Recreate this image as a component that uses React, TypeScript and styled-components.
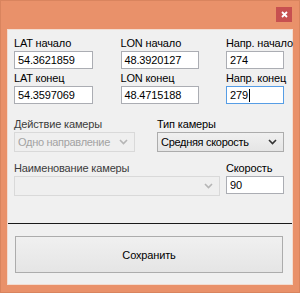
import React, { FC } from "react";
import styled, { createGlobalStyle } from "styled-components";

const Global = createGlobalStyle`
  html, body {
    margin: 0;
    padding: 0;
    background: #ffffff;
  }
  * {
    box-sizing: border-box;
  }
`;

const Frame = styled.div`
  width: 300px;
  height: 293px;
  background-color: #e9916a;
  border: 1px solid #d9845e;
  display: flex;
  flex-direction: column;
  padding: 0 6px 7px 6px;
  font-family: "Liberation Sans", Arial, sans-serif;
  font-size: 11px;
  letter-spacing: -0.15px;
  color: #000;
`;

const TitleBar = styled.div`
  height: 28px;
  display: flex;
  justify-content: flex-end;
  padding-top: 6px;
  padding-right: 1px;
`;

const CloseButton = styled.button`
  width: 16px;
  height: 15px;
  border: none;
  padding: 0;
  background-color: #c75050;
  display: flex;
  align-items: center;
  justify-content: center;
`;

const Client = styled.div`
  flex: 1;
  background-color: #f0f0f0;
  border: 1px solid #f3dcd0;
  display: flex;
  flex-direction: column;
`;

const Fields = styled.div`
  padding: 6px 8px 0 6px;
  display: flex;
  flex-direction: column;
`;

const Row = styled.div<{ $top?: number }>`
  display: flex;
  justify-content: space-between;
  align-items: flex-start;
  margin-top: ${(p) => p.$top ?? 0}px;
`;

const Field = styled.div<{ $w: number }>`
  width: ${(p) => p.$w}px;
  display: flex;
  flex-direction: column;
`;

const Label = styled.div<{ $muted?: boolean }>`
  height: 15px;
  line-height: 15px;
  white-space: nowrap;
  color: ${(p) => (p.$muted ? "#3c3c3c" : "#000")};
`;

const TextBox = styled.div<{ $focus?: boolean }>`
  height: 18px;
  background-color: #fff;
  border: 1px solid ${(p) => (p.$focus ? "#569de5" : "#abadb3")};
  padding: 0 3px;
  line-height: 16px;
  white-space: nowrap;
  overflow: hidden;
  display: flex;
  align-items: center;
`;

const Caret = styled.span`
  display: inline-block;
  width: 1px;
  height: 13px;
  background-color: #000;
  margin-left: 1px;
`;

const Combo = styled.div<{ $disabled?: boolean }>`
  height: 20px;
  border: 1px solid ${(p) => (p.$disabled ? "#d9d9d9" : "#acacac")};
  background: ${(p) =>
    p.$disabled ? "#efefef" : "linear-gradient(#f0f0f0, #e5e5e5)"};
  color: ${(p) => (p.$disabled ? "#a3a3a3" : "#000")};
  letter-spacing: -0.3px;
  white-space: nowrap;
  display: flex;
  align-items: center;
  justify-content: space-between;
  padding: 0 6px 0 3px;
`;

const Separator = styled.div`
  height: 1px;
  background-color: #1a1a1a;
  margin-top: 27px;
`;

const SaveButton = styled.button`
  margin: 12px 9px 0 7px;
  height: 37px;
  border: 1px solid #acacac;
  background: linear-gradient(#f0f0f0, #e5e5e5);
  font-family: inherit;
  font-size: inherit;
  letter-spacing: inherit;
  color: #000;
`;

const Chevron: FC<{ color: string }> = ({ color }) => (
  <svg width="9" height="6" viewBox="0 0 9 6">
    <polyline
      points="1,1 4.5,4.5 8,1"
      fill="none"
      stroke={color}
      strokeWidth="1.6"
    />
  </svg>
);

const App: FC = () => {
  return (
    <>
      <Global />
      <Frame>
        <TitleBar>
          <CloseButton>
            <svg width="7" height="7" viewBox="0 0 7 7">
              <path d="M1 1 L6 6 M6 1 L1 6" stroke="#fff" strokeWidth="1.8" />
            </svg>
          </CloseButton>
        </TitleBar>
        <Client>
          <Fields>
            <Row>
              <Field $w={79}>
                <Label>LAT начало</Label>
                <TextBox>54.3621859</TextBox>
              </Field>
              <Field $w={78}>
                <Label>LON начало</Label>
                <TextBox>48.3920127</TextBox>
              </Field>
              <Field $w={58}>
                <Label>Напр. начало</Label>
                <TextBox>274</TextBox>
              </Field>
            </Row>
            <Row $top={2}>
              <Field $w={79}>
                <Label>LAT конец</Label>
                <TextBox>54.3597069</TextBox>
              </Field>
              <Field $w={78}>
                <Label>LON конец</Label>
                <TextBox>48.4715188</TextBox>
              </Field>
              <Field $w={58}>
                <Label>Напр. конец</Label>
                <TextBox $focus>
                  279
                  <Caret />
                </TextBox>
              </Field>
            </Row>
            <Row $top={13}>
              <Field $w={121}>
                <Label $muted>Действие камеры</Label>
                <Combo $disabled>
                  Одно направление
                  <Chevron color="#b5b5b5" />
                </Combo>
              </Field>
              <Field $w={127}>
                <Label>Тип камеры</Label>
                <Combo>
                  Средняя скорость
                  <Chevron color="#333" />
                </Combo>
              </Field>
            </Row>
            <Row $top={9}>
              <Field $w={206}>
                <Label $muted>Наименование камеры</Label>
                <Combo $disabled>
                  <span />
                  <Chevron color="#b5b5b5" />
                </Combo>
              </Field>
              <Field $w={58}>
                <Label>Скорость</Label>
                <TextBox>90</TextBox>
              </Field>
            </Row>
          </Fields>
          <Separator />
          <SaveButton>Сохранить</SaveButton>
        </Client>
      </Frame>
    </>
  );
};

export default App;
